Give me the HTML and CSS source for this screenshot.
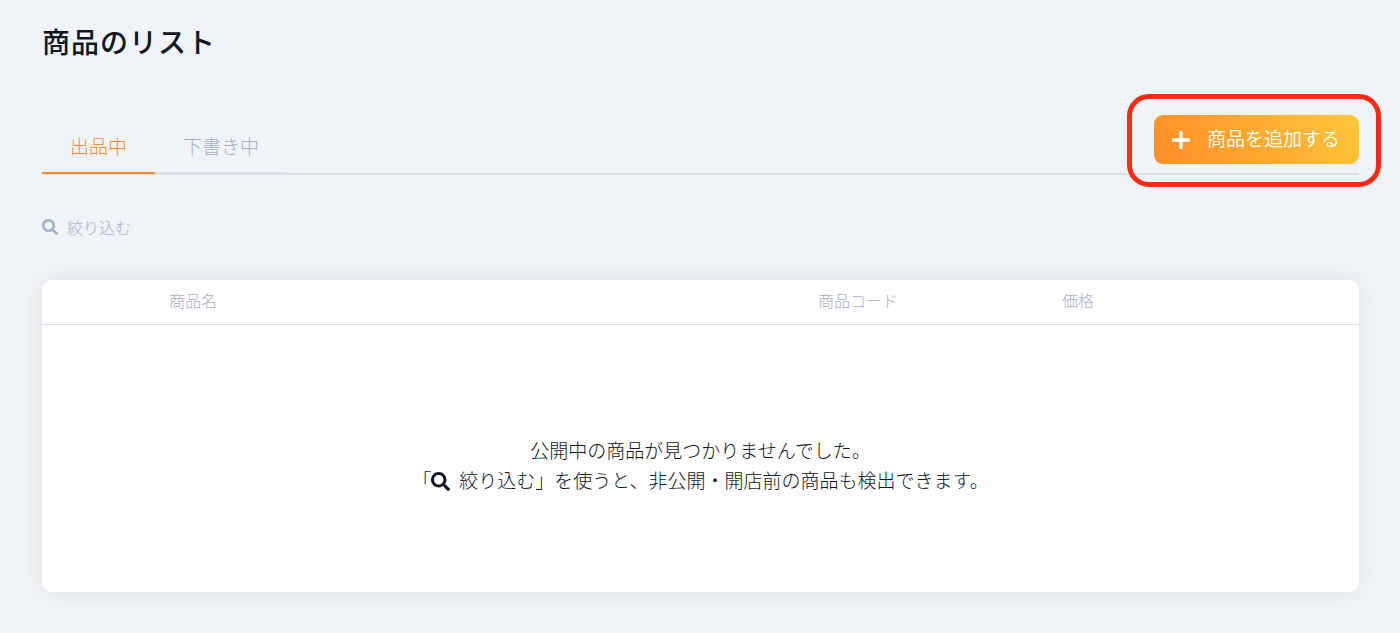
FILE: index.html
```html
<!DOCTYPE html>
<html lang="ja">
<head>
    <meta charset="UTF-8">
    <meta name="viewport" content="width=device-width, initial-scale=1.0">
    <title>商品のリスト</title>
    <link rel="stylesheet" href="styles.css">
</head>
<body>
    <svg class="sprite" aria-hidden="true">
        <symbol id="search" viewBox="0 0 512 512">
            <path d="M505 442.700L405.300 343c-4.500-4.500-10.600-7-17-7H372c27.600-35.300 44-79.700 44-128C416 93.100 322.900 0 208 0S0 93.100 0 208s93.100 208 208 208c48.300 0 92.700-16.400 128-44v16.300c0 6.400 2.500 12.500 7 17l99.700 99.700c9.400 9.400 24.600 9.400 33.900 0l28.300-28.300c9.400-9.400 9.400-24.600.1-34zM208 336c-70.700 0-128-57.200-128-128 0-70.700 57.200-128 128-128 70.700 0 128 57.200 128 128 0 70.700-57.200 128-128 128z"/>
        </symbol>
    </svg>

    <main class="page">
        <h1>商品のリスト</h1>

        <div class="toolbar">
            <nav class="tabs">
                <a class="tab active" href="#" aria-current="page">出品中</a>
                <a class="tab" href="#">下書き中</a>
            </nav>
            <div class="add">
                <button class="add-button" type="button">
                    <svg class="plus" viewBox="0 0 16 16" aria-hidden="true">
                        <path d="M8 1.200v13.600M1.200 8h13.600"/>
                    </svg>
                    商品を追加する
                </button>
                <span class="highlight"></span>
            </div>
        </div>

        <button class="filter" type="button">
            <svg class="icon" aria-hidden="true"><use href="#search"/></svg>
            絞り込む
        </button>

        <table class="products">
            <thead>
                <tr>
                    <th class="check"></th>
                    <th>商品名</th>
                    <th class="code">商品コード</th>
                    <th class="price">価格</th>
                </tr>
            </thead>
            <tbody>
                <tr>
                    <td class="empty" colspan="4">
                        公開中の商品が見つかりませんでした。<br>
                        「<svg class="icon-large" aria-hidden="true"><use href="#search"/></svg>絞り込む」を使うと、非公開・開店前の商品も検出できます。
                    </td>
                </tr>
            </tbody>
        </table>
    </main>
</body>
</html>
```

FILE: styles.css
```css
body {
    margin: 0;
    background: #f0f4f9;
    color: #0e1723;
    font-family: "Noto Sans CJK JP", sans-serif;
    font-size: 19px;
    font-weight: 300;
    line-height: 30px;
}
.sprite {
    display: none;
}
.page {
    padding: 19px 41px 41px 42px;
}
h1 {
    margin: 0;
    font-size: 28px;
    font-weight: 500;
    line-height: 44px;
    letter-spacing: 1px;
}
.toolbar {
    display: flex;
    justify-content: space-between;
    align-items: flex-end;
    margin-top: 52px;
    border-bottom: 2px solid #d9dfe9;
}
.tabs {
    display: flex;
    margin-bottom: -1px;
}
.tab {
    padding: 0 28px 11px;
    border-bottom: 2px solid #d9dfe9;
    color: #a3b2c7;
    text-decoration: none;
}
.tab.active {
    border-color: #ff8a32;
    color: #ff8a32;
}
.add {
    position: relative;
    margin-bottom: 9px;
}
.add-button {
    display: flex;
    align-items: center;
    gap: 17px;
    height: 49px;
    padding: 0 19px 4px 18px;
    border: 0;
    border-radius: 9px;
    background: linear-gradient(60deg, #ff8c26, #ffc73a);
    color: #fff;
    font: inherit;
    font-weight: 350;
    cursor: pointer;
}
.plus {
    width: 18px;
    height: 18px;
    margin-top: 5px;
    fill: none;
    stroke: #fff;
    stroke-width: 3;
    stroke-linecap: round;
}
.highlight {
    position: absolute;
    top: -21px;
    right: -22px;
    bottom: -23px;
    left: -27px;
    border: 5px solid #ff2a14;
    border-radius: 22px;
    pointer-events: none;
}
.filter {
    display: flex;
    align-items: center;
    gap: 9px;
    margin: 40px 0 0;
    padding: 0;
    border: 0;
    background: none;
    color: #a3b2c7;
    font: inherit;
    font-size: 16px;
    line-height: 24px;
    cursor: pointer;
}
.icon {
    width: 16px;
    height: 16px;
    fill: #a3b2c7;
}
.icon-large {
    width: 19px;
    height: 19px;
    margin-right: 9px;
    vertical-align: -3px;
    fill: #0e1723;
}
.products {
    width: 100%;
    margin-top: 41px;
    border-spacing: 0;
    border-radius: 9px;
    background: #fff;
    box-shadow: 0 0 20px rgba(40, 60, 80, 0.1);
    table-layout: fixed;
}
th {
    padding: 8px 0 12px;
    border-bottom: 1px solid #d9e0e9;
    color: #a3b2c7;
    font-size: 16px;
    font-weight: 300;
    line-height: 24px;
    text-align: left;
}
.check {
    width: 127px;
}
.code {
    width: 244px;
}
.price {
    width: 297px;
}
.empty {
    padding: 110px 0 97px;
    text-align: center;
}
```
